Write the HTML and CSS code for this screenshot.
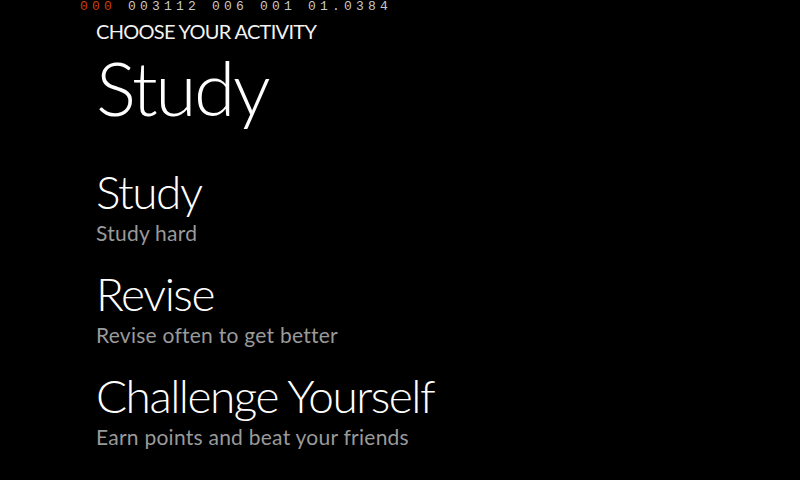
FILE: index.html
```html
<!DOCTYPE html>
<html>
<head>
<meta charset="utf-8">
<link rel="stylesheet" href="styles.css">
</head>
<body>
<div class="fps"><span class="fps-hot">000</span> 003112 006 001 01.0384</div>
<main class="page">
  <div class="app-title">CHOOSE YOUR ACTIVITY</div>
  <h1 class="page-title">Study</h1>
  <ul class="list">
    <li class="item">
      <div class="item-title">Study</div>
      <div class="item-sub">Study hard</div>
    </li>
    <li class="item">
      <div class="item-title">Revise</div>
      <div class="item-sub">Revise often to get better</div>
    </li>
    <li class="item">
      <div class="item-title">Challenge Yourself</div>
      <div class="item-sub">Earn points and beat your friends</div>
    </li>
  </ul>
</main>
</body>
</html>
```
FILE: styles.css
```css
html, body {
  margin: 0;
  padding: 0;
  background: #000;
  width: 800px;
  height: 480px;
  overflow: hidden;
}
body {
  font-family: "Lato", "Open Sans", sans-serif;
  color: #fff;
}
.fps {
  font-family: "Liberation Mono", monospace;
  font-size: 13px;
  line-height: 12px;
  letter-spacing: 4.2px;
  color: #c8c8c8;
  padding-left: 80px;
  padding-top: 1px;
  height: 11px;
  white-space: pre;
}
.fps-hot {
  color: #c8400c;
}
.page {
  padding-left: 96px;
}
.app-title {
  font-size: 20px;
  line-height: 24px;
  margin-top: 7px;
  font-weight: 400;
  letter-spacing: -0.7px;
  color: #f2f2f2;
}
.page-title {
  margin: 0;
  font-size: 75px;
  line-height: 80px;
  font-weight: 300;
  margin-top: 4px;
  letter-spacing: -2.4px;
}
.list {
  list-style: none;
  margin: 0;
  padding: 0;
  margin-top: 40px;
  display: flex;
  flex-direction: column;
  gap: 22px;
}
.item-title {
  font-size: 46px;
  line-height: 50px;
  font-weight: 300;
  letter-spacing: -1.5px;
}
.item-sub {
  font-size: 21px;
  line-height: 28px;
  margin-top: 2px;
  color: #9a9a9a;
  letter-spacing: 0.25px;
}
```
